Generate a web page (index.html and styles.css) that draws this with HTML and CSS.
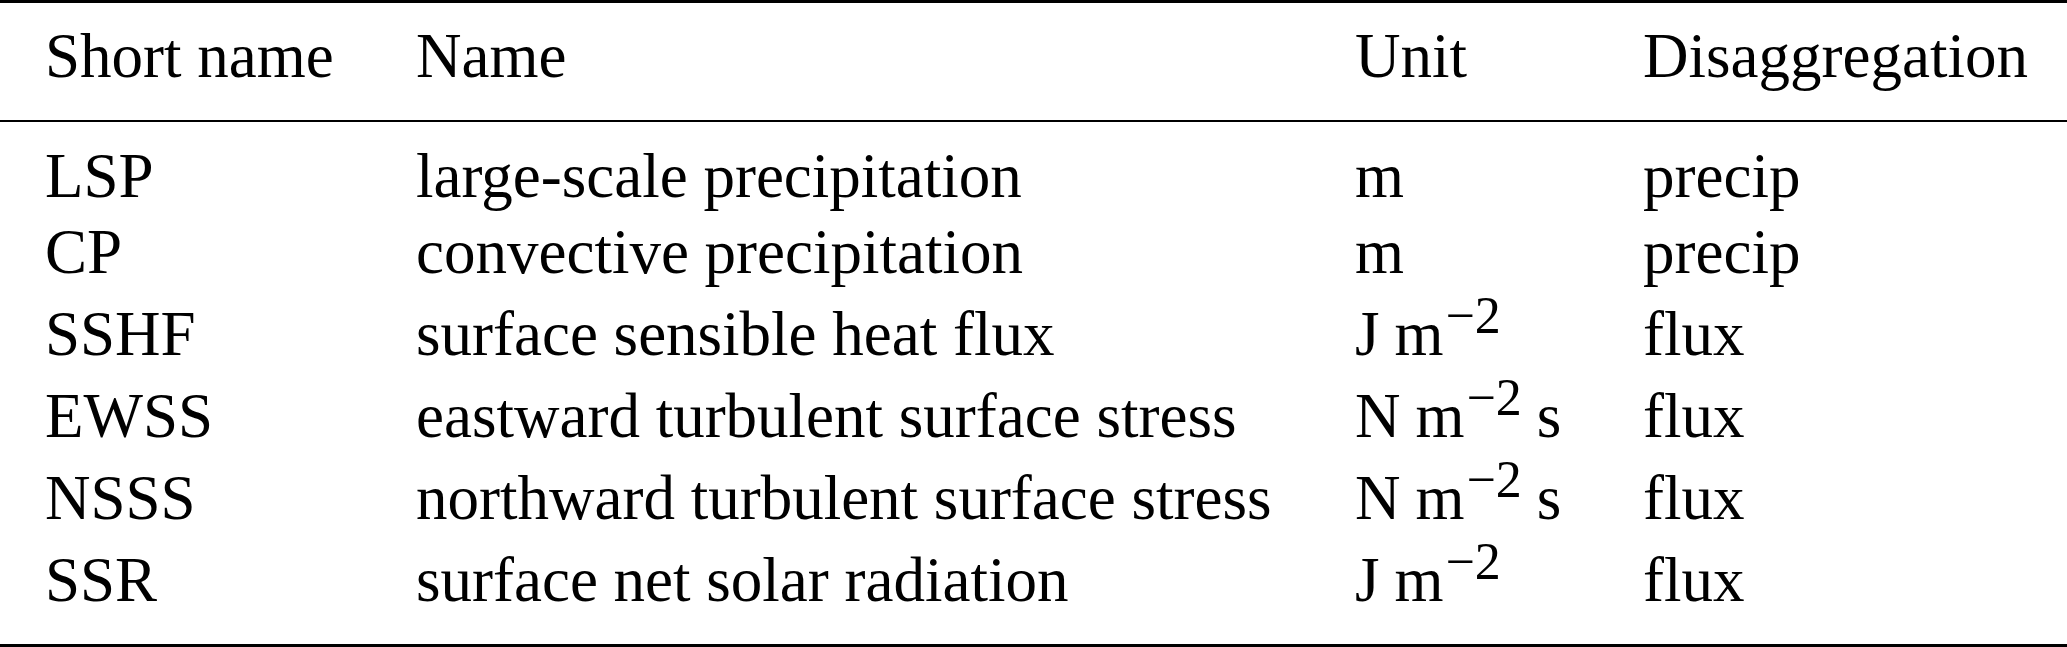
FILE: index.html
```html
<html lang="en">
<head>
    <meta charset="UTF-8">
    <meta name="viewport" content="width=device-width, initial-scale=1.0">
    <title>Variables</title>

    <link rel="stylesheet" href="styles.css">
</head>
<body>

    <table class="vars">
        <colgroup>
            <col class="c-short">
            <col class="c-name">
            <col class="c-unit">
            <col class="c-dis">
        </colgroup>
        <thead>
            <tr>
                <th>Short name</th>
                <th>Name</th>
                <th>Unit</th>
                <th>Disaggregation</th>
            </tr>
        </thead>
        <tbody>
            <tr class="first">
                <td>LSP</td>
                <td>large-scale precipitation</td>
                <td>m</td>
                <td>precip</td>
            </tr>
            <tr>
                <td>CP</td>
                <td>convective precipitation</td>
                <td>m</td>
                <td>precip</td>
            </tr>
            <tr class="tall">
                <td>SSHF</td>
                <td>surface sensible heat flux</td>
                <td>J<span class="thin"></span>m<sup>−2</sup></td>
                <td>flux</td>
            </tr>
            <tr class="tall">
                <td>EWSS</td>
                <td>eastward turbulent surface stress</td>
                <td>N<span class="thin"></span>m<sup>−2</sup><span class="thin"></span>s</td>
                <td>flux</td>
            </tr>
            <tr class="tall">
                <td>NSSS</td>
                <td>northward turbulent surface stress</td>
                <td>N<span class="thin"></span>m<sup>−2</sup><span class="thin"></span>s</td>
                <td>flux</td>
            </tr>
            <tr class="tall last">
                <td>SSR</td>
                <td>surface net solar radiation</td>
                <td>J<span class="thin"></span>m<sup>−2</sup></td>
                <td>flux</td>
            </tr>
        </tbody>
    </table>

</body>
</html>
```

FILE: styles.css
```css
html,
body {
  margin: 0;
  background-color: #ffffff;
  overflow: hidden;
}

body {
  font-family: "Liberation Serif", "Times New Roman", serif;
  color: #000000;
}

.vars {
  width: 100%;
  table-layout: fixed;
  border-collapse: separate;
  border-spacing: 0;
  font-size: 63px;
  line-height: 76px;
}

.c-short { width: 373px; }
.c-name  { width: 939px; }
.c-unit  { width: 288px; }

.vars th,
.vars td {
  text-align: left;
  font-weight: normal;
  white-space: nowrap;
  padding: 0 0 0 43px;
}

.vars th:first-child,
.vars td:first-child {
  padding-left: 45px;
}

/* booktabs-like rules: heavy top, light middle, heavy bottom */
.vars th {
  border-top: 3px solid #000;
  border-bottom: 2px solid #000;
  padding-top: 15px;
  padding-bottom: 26px;
}

.vars tr.first td {
  padding-top: 16px;
}

/* rows with a superscript sit a bit lower */
.vars tr.tall td {
  padding-top: 6px;
}

.vars tr.last td {
  padding-bottom: 26px;
  border-bottom: 3px solid #000;
}

.vars sup {
  font-size: 52px;
  line-height: 0;
  vertical-align: 22px;
  margin-left: 2px;
}

/* thin space between unit symbols */
.thin {
  display: inline-block;
  width: 15px;
}
```
